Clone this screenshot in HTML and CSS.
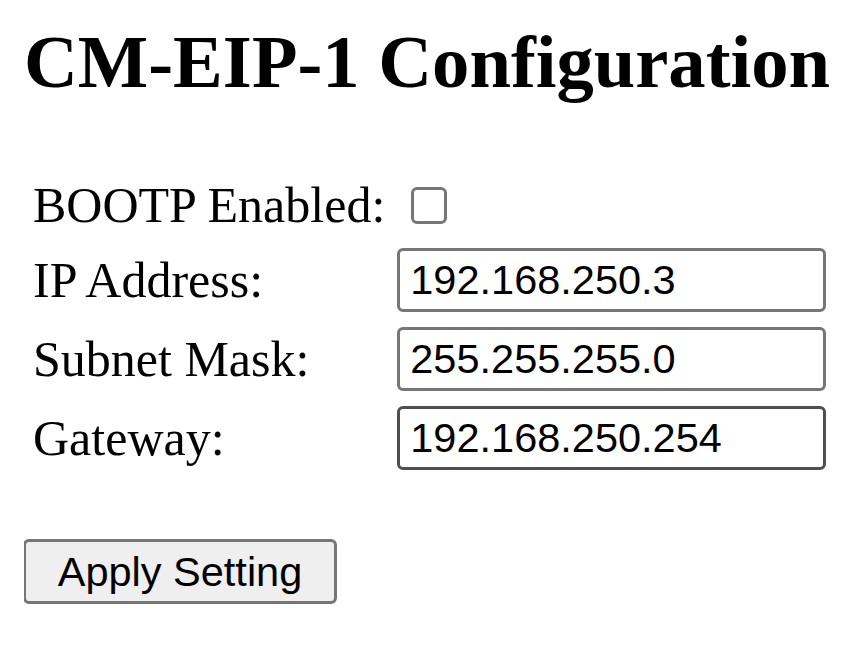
FILE: index.html
```html
<!DOCTYPE html>
<html>
<head>
<meta charset="utf-8">
<title>CM-EIP-1 Configuration</title>
<link rel="stylesheet" href="styles.css">
</head>
<body>
<h1 class="title">CM-EIP-1 Configuration</h1>
<form class="config">
  <table class="fields">
    <tr>
      <td class="label">BOOTP Enabled:</td>
      <td><input class="check" type="checkbox"></td>
    </tr>
    <tr>
      <td class="label">IP Address:</td>
      <td><input class="field" type="text" value="192.168.250.3"></td>
    </tr>
    <tr>
      <td class="label">Subnet Mask:</td>
      <td><input class="field" type="text" value="255.255.255.0"></td>
    </tr>
    <tr>
      <td class="label">Gateway:</td>
      <td><input class="field field-hover" type="text" value="192.168.250.254"></td>
    </tr>
  </table>
  <button class="apply" type="button">Apply Setting</button>
</form>
</body>
</html>
```
FILE: styles.css
```css
html, body {
  background: #ffffff;
}
body {
  margin: 0 0 0 24px;
  font-family: "Liberation Serif", "Times New Roman", serif;
  color: #000;
}
.title {
  margin: 19px 0 0;
  font-size: 74.6px;
  font-weight: bold;
  line-height: 86px;
  white-space: nowrap;
}
.config {
  margin: 62px 0 0;
}
.fields {
  border-collapse: separate;
  border-spacing: 6px 7px;
  font-size: 50px;
}
.fields td {
  padding: 4px 3px;
  vertical-align: middle;
}
.label {
  width: 352px;
  white-space: nowrap;
  line-height: 55px;
}
.check {
  appearance: none;
  -webkit-appearance: none;
  box-sizing: border-box;
  width: 36px;
  height: 37px;
  margin: 0 0 0 14px;
  border: 3px solid #767676;
  border-radius: 6px;
  background: #fff;
  display: block;
}
.field {
  box-sizing: border-box;
  display: block;
  width: 429px;
  height: 64px;
  margin: 0;
  padding: 0 10px;
  border: 3px solid #767676;
  border-radius: 6px;
  font-family: "Liberation Sans", Arial, sans-serif;
  font-size: 41.5px;
  color: #000;
  background: #fff;
  outline: none;
}
.field-hover {
  border-color: #4f4f4f;
}
.apply {
  box-sizing: border-box;
  display: block;
  width: 314px;
  height: 65px;
  margin: 58px 0 0 -1px;
  padding: 0;
  border: 3px solid #767676;
  border-radius: 6px;
  background: #efefef;
  font-family: "Liberation Sans", Arial, sans-serif;
  font-size: 41.5px;
  color: #000;
}
```
